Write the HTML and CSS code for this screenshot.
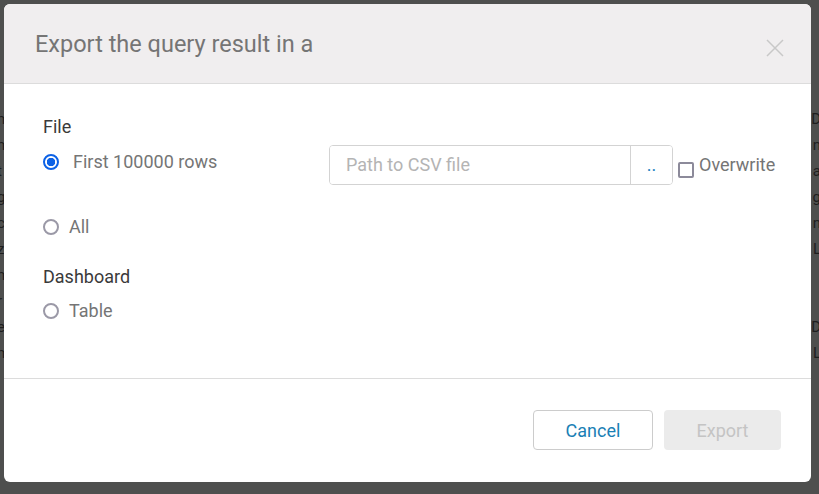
FILE: index.html
```html
<!DOCTYPE html>
<html lang="en">
<head>
<meta charset="utf-8">
<title>Export</title>
<link rel="stylesheet" href="styles.css">
</head>
<body>
<div class="page">
  <div class="bg-row"><span>m</span><span>D</span></div>
  <div class="bg-row"><span>m</span><span>n</span></div>
  <div class="bg-row"><span>t</span><span>a</span></div>
  <div class="bg-row"><span>g</span><span>g</span></div>
  <div class="bg-row"><span>c</span><span>n</span></div>
  <div class="bg-row"><span>z</span><span>L</span></div>
  <div class="bg-row"><span>m</span><span>&nbsp;</span></div>
  <div class="bg-row"><span>r</span><span>&nbsp;</span></div>
  <div class="bg-row"><span>e</span><span>D</span></div>
  <div class="bg-row"><span>m</span><span>L</span></div>
</div>

<div class="dialog">
  <div class="dialog-header">
    <h1 class="dialog-title">Export the query result in a</h1>
    <button class="close-btn" aria-label="Close">
      <svg width="18" height="18" viewBox="0 0 18 18"><path d="M1 1 L17 17 M17 1 L1 17" stroke="#c8c8c8" stroke-width="1.5" fill="none"/></svg>
    </button>
  </div>

  <div class="dialog-body">
    <div class="group-label">File</div>
    <div class="file-row">
      <label class="option option-first">
        <input type="radio" name="exp" checked>
        <span>First 100000 rows</span>
      </label>
      <div class="path-group">
        <input class="path-input" type="text" placeholder="Path to CSV file">
        <button class="browse-btn">..</button>
      </div>
      <label class="overwrite">
        <input type="checkbox">
        <span>Overwrite</span>
      </label>
    </div>
    <label class="option option-all">
      <input type="radio" name="exp">
      <span>All</span>
    </label>

    <div class="group-label group-dash">Dashboard</div>
    <label class="option option-table">
      <input type="radio" name="exp">
      <span>Table</span>
    </label>
  </div>

  <div class="dialog-footer">
    <button class="btn btn-cancel">Cancel</button>
    <button class="btn btn-export" disabled>Export</button>
  </div>
</div>
</body>
</html>
```

FILE: styles.css
```css
html, body {
  margin: 0;
  padding: 0;
  width: 819px;
  height: 494px;
  overflow: hidden;
  background: #4e4f4e;
  font-family: Roboto, "Liberation Sans", sans-serif;
}

.page {
  padding-top: 106px;
  color: #1e1e1e;
  font-size: 15px;
}

.bg-row {
  display: flex;
  justify-content: space-between;
  height: 26px;
  line-height: 26px;
  margin-left: -3px;
  margin-right: -2px;
}

.dialog {
  position: absolute;
  left: 4px;
  top: 4px;
  width: 807px;
  height: 478px;
  background: #ffffff;
  border-radius: 6px;
  overflow: hidden;
  display: flex;
  flex-direction: column;
}

.dialog-header {
  height: 79px;
  flex: none;
  background: #f0eeef;
  border-bottom: 1px solid #dcdcdc;
  display: flex;
  align-items: center;
  justify-content: space-between;
  padding: 0 27px 0 31px;
}

.dialog-title {
  margin: 0;
  font-weight: 400;
  font-size: 23.5px;
  color: #757575;
  line-height: 28px;
}

.close-btn {
  border: 0;
  background: none;
  padding: 0;
  width: 18px;
  height: 18px;
  margin-top: 9px;
  display: block;
}
.close-btn svg { display: block; }

.dialog-body {
  flex: 1;
  padding: 31px 30px 0 39px;
  font-size: 18px;
  line-height: 24px;
}

.group-label {
  color: #3a3a3a;
}

.group-dash {
  margin-top: 26px;
}

.file-row {
  display: flex;
  align-items: flex-start;
  margin-top: 6px;
}

.option {
  display: flex;
  align-items: center;
  color: #757575;
}

.option input {
  appearance: none;
  -webkit-appearance: none;
  margin: 0;
  width: 16px;
  height: 16px;
  border: 2px solid #9b99a7;
  border-radius: 50%;
  box-sizing: border-box;
  background: #fff;
  flex: none;
}

.option input:checked {
  border-color: #0d62e6;
  background: radial-gradient(circle, #0d62e6 0 4px, #fff 4.5px);
}

.option span { margin-left: 10px; }

.option-first {
  flex: none;
  width: 286px;
  margin-top: 5px;
}
.option-first span { margin-left: 14px; }

.option-all { margin-top: 30px; }
.option-table { margin-top: 10px; }

.path-group {
  flex: none;
  display: flex;
  width: 344px;
  height: 40px;
  box-sizing: border-box;
  border: 1px solid #d3d3d3;
  border-radius: 4px;
  overflow: hidden;
}

.path-input {
  flex: 1;
  min-width: 0;
  border: 0;
  outline: none;
  padding: 0 0 0 16px;
  font: inherit;
  font-size: 18px;
  color: #333;
  background: #fff;
}
.path-input::placeholder { color: #b4b4b4; }

.browse-btn {
  width: 42px;
  border: 0;
  border-left: 1px solid #d3d3d3;
  background: #fff;
  color: #1e84c2;
  font: inherit;
  font-size: 18px;
  padding: 0;
}

.overwrite {
  flex: none;
  display: flex;
  align-items: flex-start;
  margin-top: 8px;
  margin-left: 5px;
  color: #757575;
}

.overwrite input {
  appearance: none;
  -webkit-appearance: none;
  margin: 9px 0 0 0;
  width: 16px;
  height: 16px;
  box-sizing: border-box;
  border: 2px solid #8c8a9a;
  border-radius: 2px;
  background: #fff;
}

.overwrite span { margin-left: 5px; }

.dialog-footer {
  height: 104px;
  flex: none;
  border-top: 1px solid #dcdcdc;
  display: flex;
  align-items: center;
  justify-content: flex-end;
  gap: 11px;
  padding: 0 30px 1px 0;
  box-sizing: border-box;
}

.btn {
  height: 40px;
  border-radius: 4px;
  font-family: inherit;
  font-size: 18px;
  padding: 0;
  margin-top: 0;
}

.btn-cancel {
  width: 120px;
  border: 1px solid #cccccc;
  background: #fff;
  color: #1a7fb5;
}

.btn-export {
  width: 117px;
  border: 0;
  background: #ebebeb;
  color: #c4c4c4;
}
```
